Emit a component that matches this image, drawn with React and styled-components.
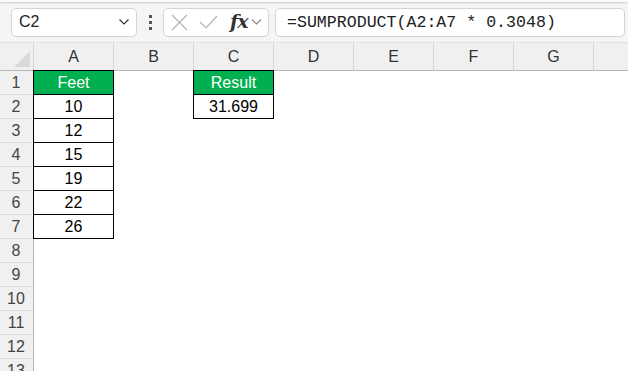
import React from 'react';
import styled, { createGlobalStyle } from 'styled-components';

const green = '#00b050';
const headerBg = '#f0f0f0';
const barBg = '#f5f5f5';

const GlobalStyle = createGlobalStyle`
	html, body {
		margin: 0;
		padding: 0;
		background: #fff;
		overflow: hidden;
	}
	body {
		font-family: "Liberation Sans", Arial, sans-serif;
	}
`;

const Page = styled.div`
	width: 628px;
	height: 371px;
	overflow: hidden;
	background: #fff;
`;

const TopStrip = styled.div`
	height: 2px;
	background: #fafafa;
	box-shadow: 0 1px 2px rgba(0, 0, 0, 0.18);
	position: relative;
	z-index: 1;
`;

const FormulaBar = styled.div`
	display: flex;
	align-items: center;
	height: 41px;
	padding: 0 0 0 11px;
	background: ${barBg};
	border-bottom: 1px solid #e2e2e2;
	box-sizing: border-box;
`;

const Box = styled.div`
	display: flex;
	align-items: center;
	height: 29px;
	box-sizing: border-box;
	background: #fff;
	border: 1px solid #d4d4d4;
	border-radius: 5px;
`;

const NameBox = styled(Box)`
	width: 126px;
	padding: 0 7px 0 7px;
	justify-content: space-between;
	font-size: 16px;
	color: #222;
`;

const Dots = styled.div`
	display: flex;
	flex-direction: column;
	gap: 3px;
	margin: 0 11px 0 12px;

	span {
		width: 3px;
		height: 3px;
		background: #555;
	}
`;

const ActionBox = styled(Box)`
	width: 106px;
	padding: 0 3px 0 7px;
	gap: 11px;
`;

const Fx = styled.span`
	font-family: "DejaVu Serif", "Liberation Serif", serif;
	font-style: italic;
	font-weight: 600;
	font-size: 19px;
	color: #333;
	letter-spacing: -1px;
	margin-left: 1px;
	margin-right: -8px;
	padding-bottom: 2px;
`;

const FormulaInput = styled(Box)`
	flex: 1;
	margin-left: 6px;
	margin-right: 3px;
	padding-left: 11px;
	font-family: "Liberation Mono", "DejaVu Sans Mono", monospace;
	font-size: 16.6px;
	color: #222;
`;

const Sheet = styled.div`
	display: grid;
	grid-template-columns: 34px repeat(8, 80px);
	grid-template-rows: 28px;
	grid-auto-rows: 24px;
	font-size: 16px;
`;

const Corner = styled.div`
	background: ${headerBg};
	border-right: 1px solid #d6d6d6;
	border-bottom: 1px solid #b8b8b8;
	box-sizing: border-box;
	display: flex;
	align-items: flex-end;
	justify-content: flex-end;
	padding: 0 3px 3px 0;
`;

const ColHead = styled.div`
	background: ${headerBg};
	border-right: 1px solid #d6d6d6;
	border-bottom: 1px solid #b8b8b8;
	box-sizing: border-box;
	display: flex;
	align-items: center;
	justify-content: center;
	color: #333;
	font-size: 16px;
	padding-top: 1px;
`;

const RowHead = styled.div`
	background: ${headerBg};
	border-right: 1px solid #b8b8b8;
	border-bottom: 1px solid #dcdcdc;
	box-sizing: border-box;
	display: flex;
	align-items: center;
	justify-content: center;
	color: #444;
	font-size: 16px;
	padding-right: 1px;
`;

const Cell = styled.div`
	display: flex;
	align-items: center;
	justify-content: center;
	box-sizing: border-box;
	font-size: 16px;
	color: ${props => props.$head ? '#fff' : '#000'};
	background: ${props => props.$head ? green : 'transparent'};
	${props => props.$boxed && `
		border: 1px solid #000;
		margin: -1px 0 0 -1px;
	`}
`;

const XIcon = () => (
	<svg width="17" height="17" viewBox="0 0 17 17" fill="none" stroke="#b3b3b3" strokeWidth="1.2">
		<path d="M1 1 L16 16 M16 1 L1 16" />
	</svg>
);

const CheckIcon = () => (
	<svg width="19" height="14" viewBox="0 0 19 14" fill="none" stroke="#b3b3b3" strokeWidth="1.2">
		<path d="M1 7 L7 13 L18 1" />
	</svg>
);

const Chevron = ({ color = '#333', w = 10 }) => (
	<svg width={w} height="6" viewBox="0 0 10 6" fill="none" stroke={color} strokeWidth="1.2">
		<path d="M0.5 0.5 L5 5 L9.5 0.5" />
	</svg>
);

const CornerMark = () => (
	<svg width="16" height="16" viewBox="0 0 16 16">
		<path d="M16 0 L16 16 L0 16 Z" fill="#d9d9d9" />
	</svg>
);

const columns = ['A', 'B', 'C', 'D', 'E', 'F', 'G', 'H'];
const feet = [10, 12, 15, 19, 22, 26];

const cellFor = (row, col) => {
	if (col === 'A' && row === 1) return { text: 'Feet', head: true, boxed: true };
	if (col === 'A' && row >= 2 && row <= 7) return { text: feet[row - 2], boxed: true };
	if (col === 'C' && row === 1) return { text: 'Result', head: true, boxed: true };
	if (col === 'C' && row === 2) return { text: '31.699', boxed: true };
	return { text: '' };
};

export default function App() {
	const rows = Array.from({ length: 13 }, (_, i) => i + 1);
	return (
		<Page>
			<GlobalStyle />
			<TopStrip />
			<FormulaBar>
				<NameBox>
					<span>C2</span>
					<Chevron />
				</NameBox>
				<Dots><span /><span /><span /></Dots>
				<ActionBox>
					<XIcon />
					<CheckIcon />
					<Fx>fx</Fx>
					<Chevron color="#888" w={11} />
				</ActionBox>
				<FormulaInput>=SUMPRODUCT(A2:A7 * 0.3048)</FormulaInput>
			</FormulaBar>
			<Sheet>
				<Corner><CornerMark /></Corner>
				{columns.map(c => <ColHead key={c}>{c}</ColHead>)}
				{rows.map(r => (
					<React.Fragment key={r}>
						<RowHead>{r}</RowHead>
						{columns.map(c => {
							const cell = cellFor(r, c);
							return (
								<Cell key={c} $head={cell.head} $boxed={cell.boxed}>
									{cell.text}
								</Cell>
							);
						})}
					</React.Fragment>
				))}
			</Sheet>
		</Page>
	);
}
